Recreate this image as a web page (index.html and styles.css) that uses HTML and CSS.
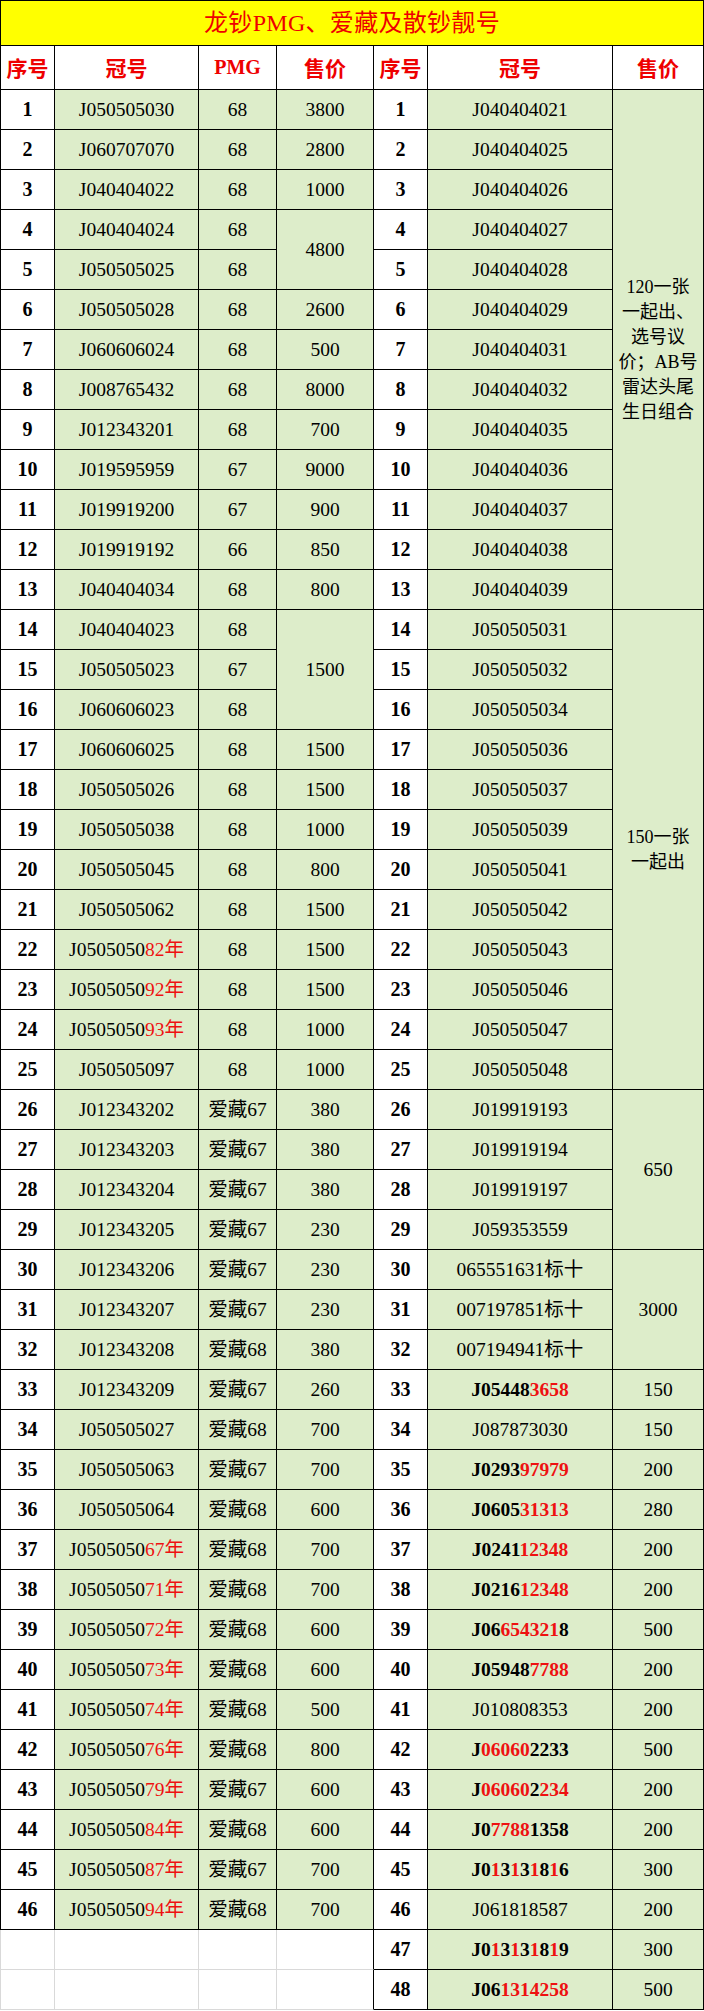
FILE: index.html
```html
<!DOCTYPE html>
<html lang="zh">
<head>
<meta charset="utf-8">
<title>龙钞PMG、爱藏及散钞靓号</title>
<link rel="stylesheet" href="styles.css">
</head>
<body>
<div class="sheet">
<div class="c title">龙钞PMG、爱藏及散钞靓号</div>
<div class="c h f">序号</div><div class="c h">冠号</div><div class="c h latin">PMG</div><div class="c h">售价</div><div class="c h">序号</div><div class="c h">冠号</div><div class="c h">售价</div>

<div class="c n f">1</div><div class="c g">J050505030</div><div class="c g">68</div><div class="c g">3800</div><div class="c n">1</div><div class="c g">J040404021</div><div class="c g m span13"><div class="note">120一张<br>一起出、<br>选号议<br>价；AB号<br>雷达头尾<br>生日组合</div></div>
<div class="c n f">2</div><div class="c g">J060707070</div><div class="c g">68</div><div class="c g">2800</div><div class="c n">2</div><div class="c g">J040404025</div>
<div class="c n f">3</div><div class="c g">J040404022</div><div class="c g">68</div><div class="c g">1000</div><div class="c n">3</div><div class="c g">J040404026</div>
<div class="c n f">4</div><div class="c g">J040404024</div><div class="c g">68</div><div class="c g m span2">4800</div><div class="c n">4</div><div class="c g">J040404027</div>
<div class="c n f">5</div><div class="c g">J050505025</div><div class="c g">68</div><div class="c n">5</div><div class="c g">J040404028</div>
<div class="c n f">6</div><div class="c g">J050505028</div><div class="c g">68</div><div class="c g">2600</div><div class="c n">6</div><div class="c g">J040404029</div>
<div class="c n f">7</div><div class="c g">J060606024</div><div class="c g">68</div><div class="c g">500</div><div class="c n">7</div><div class="c g">J040404031</div>
<div class="c n f">8</div><div class="c g">J008765432</div><div class="c g">68</div><div class="c g">8000</div><div class="c n">8</div><div class="c g">J040404032</div>
<div class="c n f">9</div><div class="c g">J012343201</div><div class="c g">68</div><div class="c g">700</div><div class="c n">9</div><div class="c g">J040404035</div>
<div class="c n f">10</div><div class="c g">J019595959</div><div class="c g">67</div><div class="c g">9000</div><div class="c n">10</div><div class="c g">J040404036</div>
<div class="c n f">11</div><div class="c g">J019919200</div><div class="c g">67</div><div class="c g">900</div><div class="c n">11</div><div class="c g">J040404037</div>
<div class="c n f">12</div><div class="c g">J019919192</div><div class="c g">66</div><div class="c g">850</div><div class="c n">12</div><div class="c g">J040404038</div>
<div class="c n f">13</div><div class="c g">J040404034</div><div class="c g">68</div><div class="c g">800</div><div class="c n">13</div><div class="c g">J040404039</div>
<div class="c n f">14</div><div class="c g">J040404023</div><div class="c g">68</div><div class="c g m span3">1500</div><div class="c n">14</div><div class="c g">J050505031</div><div class="c g m span12"><div class="note">150一张<br>一起出</div></div>
<div class="c n f">15</div><div class="c g">J050505023</div><div class="c g">67</div><div class="c n">15</div><div class="c g">J050505032</div>
<div class="c n f">16</div><div class="c g">J060606023</div><div class="c g">68</div><div class="c n">16</div><div class="c g">J050505034</div>
<div class="c n f">17</div><div class="c g">J060606025</div><div class="c g">68</div><div class="c g">1500</div><div class="c n">17</div><div class="c g">J050505036</div>
<div class="c n f">18</div><div class="c g">J050505026</div><div class="c g">68</div><div class="c g">1500</div><div class="c n">18</div><div class="c g">J050505037</div>
<div class="c n f">19</div><div class="c g">J050505038</div><div class="c g">68</div><div class="c g">1000</div><div class="c n">19</div><div class="c g">J050505039</div>
<div class="c n f">20</div><div class="c g">J050505045</div><div class="c g">68</div><div class="c g">800</div><div class="c n">20</div><div class="c g">J050505041</div>
<div class="c n f">21</div><div class="c g">J050505062</div><div class="c g">68</div><div class="c g">1500</div><div class="c n">21</div><div class="c g">J050505042</div>
<div class="c n f">22</div><div class="c g">J0505050<span class="r">82年</span></div><div class="c g">68</div><div class="c g">1500</div><div class="c n">22</div><div class="c g">J050505043</div>
<div class="c n f">23</div><div class="c g">J0505050<span class="r">92年</span></div><div class="c g">68</div><div class="c g">1500</div><div class="c n">23</div><div class="c g">J050505046</div>
<div class="c n f">24</div><div class="c g">J0505050<span class="r">93年</span></div><div class="c g">68</div><div class="c g">1000</div><div class="c n">24</div><div class="c g">J050505047</div>
<div class="c n f">25</div><div class="c g">J050505097</div><div class="c g">68</div><div class="c g">1000</div><div class="c n">25</div><div class="c g">J050505048</div>
<div class="c n f">26</div><div class="c g">J012343202</div><div class="c g">爱藏67</div><div class="c g">380</div><div class="c n">26</div><div class="c g">J019919193</div><div class="c g m span4">650</div>
<div class="c n f">27</div><div class="c g">J012343203</div><div class="c g">爱藏67</div><div class="c g">380</div><div class="c n">27</div><div class="c g">J019919194</div>
<div class="c n f">28</div><div class="c g">J012343204</div><div class="c g">爱藏67</div><div class="c g">380</div><div class="c n">28</div><div class="c g">J019919197</div>
<div class="c n f">29</div><div class="c g">J012343205</div><div class="c g">爱藏67</div><div class="c g">230</div><div class="c n">29</div><div class="c g">J059353559</div>
<div class="c n f">30</div><div class="c g">J012343206</div><div class="c g">爱藏67</div><div class="c g">230</div><div class="c n">30</div><div class="c g">065551631标十</div><div class="c g m span3">3000</div>
<div class="c n f">31</div><div class="c g">J012343207</div><div class="c g">爱藏67</div><div class="c g">230</div><div class="c n">31</div><div class="c g">007197851标十</div>
<div class="c n f">32</div><div class="c g">J012343208</div><div class="c g">爱藏68</div><div class="c g">380</div><div class="c n">32</div><div class="c g">007194941标十</div>
<div class="c n f">33</div><div class="c g">J012343209</div><div class="c g">爱藏67</div><div class="c g">260</div><div class="c n">33</div><div class="c g b">J05448<span class="r">3658</span></div><div class="c g">150</div>
<div class="c n f">34</div><div class="c g">J050505027</div><div class="c g">爱藏68</div><div class="c g">700</div><div class="c n">34</div><div class="c g">J087873030</div><div class="c g">150</div>
<div class="c n f">35</div><div class="c g">J050505063</div><div class="c g">爱藏67</div><div class="c g">700</div><div class="c n">35</div><div class="c g b">J0293<span class="r">97979</span></div><div class="c g">200</div>
<div class="c n f">36</div><div class="c g">J050505064</div><div class="c g">爱藏68</div><div class="c g">600</div><div class="c n">36</div><div class="c g b">J0605<span class="r">31313</span></div><div class="c g">280</div>
<div class="c n f">37</div><div class="c g">J0505050<span class="r">67年</span></div><div class="c g">爱藏68</div><div class="c g">700</div><div class="c n">37</div><div class="c g b">J0241<span class="r">12348</span></div><div class="c g">200</div>
<div class="c n f">38</div><div class="c g">J0505050<span class="r">71年</span></div><div class="c g">爱藏68</div><div class="c g">700</div><div class="c n">38</div><div class="c g b">J0216<span class="r">12348</span></div><div class="c g">200</div>
<div class="c n f">39</div><div class="c g">J0505050<span class="r">72年</span></div><div class="c g">爱藏68</div><div class="c g">600</div><div class="c n">39</div><div class="c g b">J06<span class="r">654321</span>8</div><div class="c g">500</div>
<div class="c n f">40</div><div class="c g">J0505050<span class="r">73年</span></div><div class="c g">爱藏68</div><div class="c g">600</div><div class="c n">40</div><div class="c g b">J05948<span class="r">7788</span></div><div class="c g">200</div>
<div class="c n f">41</div><div class="c g">J0505050<span class="r">74年</span></div><div class="c g">爱藏68</div><div class="c g">500</div><div class="c n">41</div><div class="c g">J010808353</div><div class="c g">200</div>
<div class="c n f">42</div><div class="c g">J0505050<span class="r">76年</span></div><div class="c g">爱藏68</div><div class="c g">800</div><div class="c n">42</div><div class="c g b">J<span class="r">06060</span>2233</div><div class="c g">500</div>
<div class="c n f">43</div><div class="c g">J0505050<span class="r">79年</span></div><div class="c g">爱藏67</div><div class="c g">600</div><div class="c n">43</div><div class="c g b">J<span class="r">06060</span>2<span class="r">234</span></div><div class="c g">200</div>
<div class="c n f">44</div><div class="c g">J0505050<span class="r">84年</span></div><div class="c g">爱藏68</div><div class="c g">600</div><div class="c n">44</div><div class="c g b">J0<span class="r">7788</span>1358</div><div class="c g">200</div>
<div class="c n f">45</div><div class="c g">J0505050<span class="r">87年</span></div><div class="c g">爱藏67</div><div class="c g">700</div><div class="c n">45</div><div class="c g b">J0<span class="r">1</span>3<span class="r">1</span>3<span class="r">1</span>8<span class="r">1</span>6</div><div class="c g">300</div>
<div class="c n f">46</div><div class="c g">J0505050<span class="r">94年</span></div><div class="c g">爱藏68</div><div class="c g">700</div><div class="c n">46</div><div class="c g">J061818587</div><div class="c g">200</div>
<div class="c e f"></div><div class="c e"></div><div class="c e"></div><div class="c e e4"></div><div class="c n">47</div><div class="c g b">J0<span class="r">1</span>3<span class="r">1</span>3<span class="r">1</span>8<span class="r">1</span>9</div><div class="c g">300</div>
<div class="c e f"></div><div class="c e"></div><div class="c e"></div><div class="c e e4"></div><div class="c n">48</div><div class="c g b">J06<span class="r">1314258</span></div><div class="c g">500</div>
</div>
</body>
</html>
```

FILE: styles.css
```css
html, body {
  margin: 0;
  padding: 0;
  background: #ffffff;
}

.sheet {
  display: grid;
  width: 704px;
  grid-template-columns: 55px 144px 78px 97px 54px 185px 91px;
  grid-template-rows: 46px 44px repeat(48, 40px);
  font-family: "Liberation Serif", "Noto Sans CJK SC", serif;
  font-size: 19.5px;
  color: #000000;
}

.c {
  box-sizing: border-box;
  border-right: 1px solid #000000;
  border-bottom: 1px solid #000000;
  text-align: center;
  white-space: nowrap;
  overflow: hidden;
  line-height: 39px;
  background: #ffffff;
}

.f {
  border-left: 1px solid #000000;
}

.title {
  grid-column: 1 / -1;
  border-top: 1px solid #000000;
  border-left: 1px solid #000000;
  background: #ffff00;
  color: #ee0000;
  font-size: 24px;
  line-height: 44px;
  letter-spacing: 0.3px;
}

.h {
  color: #ee0000;
  font-weight: bold;
  font-size: 21px;
  line-height: 43px;
  font-family: "Noto Sans CJK SC", sans-serif;
}
.h.latin {
  font-family: "Liberation Serif", serif;
  font-size: 20px;
}

.n {
  font-weight: bold;
  font-size: 20px;
}

.g {
  background: #ddedca;
}

.b {
  font-weight: bold;
}

.r {
  color: #ee1111;
}

.m {
  display: flex;
  align-items: center;
  justify-content: center;
}

.span2 { grid-row: span 2; }
.span3 { grid-row: span 3; }
.span4 { grid-row: span 4; }
.span12 { grid-row: span 12; }
.span13 { grid-row: span 13; }

.note {
  font-size: 18px;
  line-height: 25px;
  white-space: normal;
  text-align: center;
}

.e {
  border-right-color: #d9d9d9;
  border-bottom-color: #d9d9d9;
}
.e.f {
  border-left-color: #d9d9d9;
}
.e.e4 {
  border-right-color: #000000;
}
```
